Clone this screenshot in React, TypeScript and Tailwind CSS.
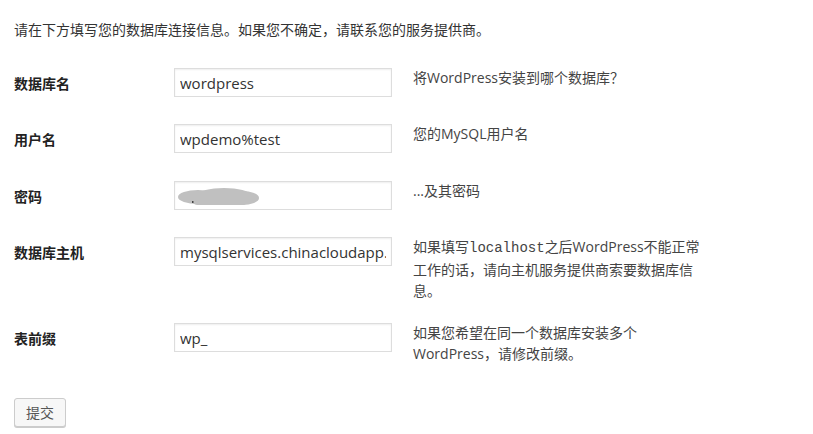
import { useState } from 'react';

const font = "font-['Open_Sans','Noto_Sans_CJK_SC',sans-serif]";

function Row({
  label,
  value,
  desc,
  className,
  blurred,
}: {
  label: string;
  value: string;
  desc: React.ReactNode;
  className?: string;
  blurred?: boolean;
}) {
  const [val, setVal] = useState(value);
  return (
    <div className={`flex items-start ${className || ''}`}>
      <label className="w-[160px] h-[29px] shrink-0 text-[14px] leading-[31px] font-bold text-[#222]">{label}</label>
      <div className="relative w-[218px] h-[29px] shrink-0">
        <input
          type="text"
          value={blurred ? '' : val}
          onChange={e => setVal(e.target.value)}
          className={`w-full h-full px-[5px] text-[15px] text-[#333] bg-white border border-[#ddd] shadow-[inset_0_1px_2px_rgba(0,0,0,0.07)] outline-none ${font}`}
        />
        {blurred && (
          <svg className="absolute left-[2px] top-[4px]" width="90" height="22" viewBox="0 0 90 22">
            <g fill="#c0c0c0" style={{ filter: 'blur(0.6px)' }}>
              <ellipse cx="22" cy="12" rx="20" ry="7" />
              <ellipse cx="48" cy="10" rx="26" ry="7" />
              <ellipse cx="66" cy="13" rx="17" ry="7" />
              <rect x="16" y="7" width="56" height="13" rx="5" />
            </g>
            <rect x="16" y="16" width="1.5" height="2" fill="#444" />
          </svg>
        )}
      </div>
      <div className="ml-[21px] w-[290px] -mt-[1px] text-[14px] leading-[21px] text-[#444]">{desc}</div>
    </div>
  );
}

export default function App() {
  return (
    <div className={`min-h-[434px] bg-white pl-[14px] pt-[20px] ${font}`}>
      <p className="text-[14px] leading-[20px] text-[#333]">请在下方填写您的数据库连接信息。如果您不确定，请联系您的服务提供商。</p>

      <Row className="mt-[28px]" label="数据库名" value="wordpress" desc="将WordPress安装到哪个数据库？" />
      <Row className="mt-[27px]" label="用户名" value="wpdemo%test" desc="您的MySQL用户名" />
      <Row className="mt-[28px]" label="密码" value="" blurred desc="...及其密码" />
      <Row
        className="mt-[27px]"
        label="数据库主机"
        value="mysqlservices.chinacloudapp.cn"
        desc={
          <>
            如果填写<code className="font-['Liberation_Mono','Noto_Sans_CJK_SC',monospace] text-[14px] leading-[21px]">localhost</code>之后WordPress不能正常工作的话，请向主机服务提供商索要数据库信息。
          </>
        }
      />
      <Row className="mt-[22px]" label="表前缀" value="wp_" desc="如果您希望在同一个数据库安装多个WordPress，请修改前缀。" />

      <button className="mt-[34px] w-[52px] h-[29px] text-[14px] text-[#555] bg-[#f7f7f7] border border-[#ccc] rounded-[3px] shadow-[0_1px_0_#ccc]">
        提交
      </button>
    </div>
  );
}
